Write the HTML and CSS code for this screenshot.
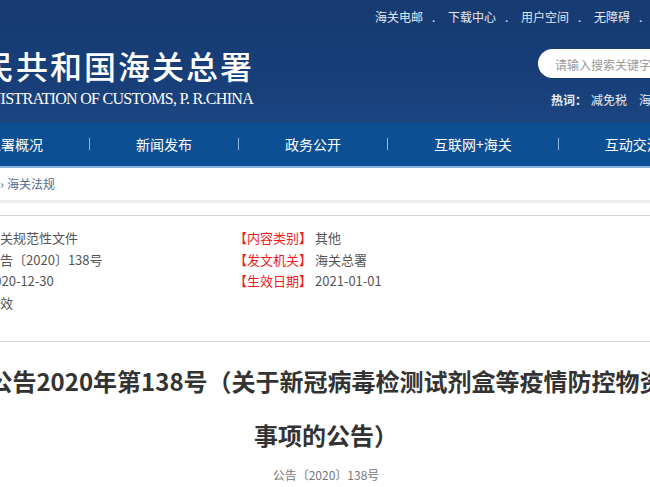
FILE: index.html
```html
<!DOCTYPE html>
<html lang="zh-CN">
<head>
  <meta charset="UTF-8" />
  <meta name="viewport" content="width=device-width, initial-scale=1.0" />
  <title>海关总署公告2020年第138号</title>
  <link rel="stylesheet" href="styles.css">
</head>
<body>
  <div class="page">
    <div class="header">
      <div class="logo">
        <div class="logo-cn">中华人民共和国海关总署</div>
        <div class="logo-en">GENERAL ADMINISTRATION OF CUSTOMS, P. R.CHINA</div>
      </div>
      <div class="header-right">
        <div class="toplinks">
          <a>海关电邮</a><span class="dot">.</span><a>下载中心</a><span class="dot">.</span><a>用户空间</a><span class="dot">.</span><a>无障碍</a><span class="dot">.</span><a>English</a>
        </div>
        <div class="search-area">
          <div class="search"><span class="placeholder">请输入搜索关键字</span></div>
          <div class="hot"><b>热词：</b><a>减免税</a><a>海关统计</a></div>
        </div>
      </div>
    </div>

    <div class="nav">
      <a>总署概况</a><span class="sep"></span>
      <a>新闻发布</a><span class="sep"></span>
      <a>政务公开</a><span class="sep"></span>
      <a>互联网+海关</a><span class="sep"></span>
      <a>互动交流</a><span class="sep"></span>
      <a>专题专栏</a>
    </div>

    <div class="crumb">
      <a>首页</a><span class="arrow">›</span><a>海关法规</a>
    </div>

    <div class="info">
      <div class="cell"><span class="label">【文件类型】</span>海关规范性文件</div>
      <div class="cell"><span class="label">【内容类别】</span>其他</div>
      <div class="cell"><span class="label">【文　　号】</span>公告〔2020〕138号</div>
      <div class="cell"><span class="label">【发文机关】</span>海关总署</div>
      <div class="cell"><span class="label">【发布日期】</span>2020-12-30</div>
      <div class="cell"><span class="label">【生效日期】</span>2021-01-01</div>
      <div class="cell"><span class="label">【效　　力】</span>有效</div>
      <div class="cell"></div>
    </div>

    <h1 class="title">海关总署公告2020年第138号（关于新冠病毒检测试剂盒等疫情防控物资出口有关事项的公告）</h1>
    <div class="docno">公告〔2020〕138号</div>
  </div>
</body>
</html>
```

FILE: styles.css
```css
* {
  box-sizing: border-box;
}
html, body {
  margin: 0;
}
body {
  overflow: hidden;
  font-family: "Noto Sans CJK SC", "Microsoft YaHei", sans-serif;
  background-color: #fff;
  color: #555;
}
a {
  color: inherit;
  text-decoration: none;
}
.page {
  width: 1000px;
  margin-left: -174px;
}

/* header */
.header {
  height: 123px;
  display: flex;
  background: linear-gradient(180deg, #163b72 0%, #183f79 70%, #1b4682 100%);
  color: #fff;
}
.logo {
  width: 427px;
  text-align: right;
  padding-top: 45px;
}
.logo-cn {
  font-size: 32px;
  line-height: 40px;
  font-weight: 500;
  letter-spacing: 2px;
  margin-right: -1px;
  white-space: nowrap;
}
.logo-en {
  font-family: "Liberation Serif", serif;
  font-size: 16px;
  line-height: 20px;
  letter-spacing: -0.7px;
  margin-top: 4px;
  white-space: nowrap;
}
.header-right {
  margin-left: 122px;
  padding-top: 9px;
}
.toplinks {
  font-size: 12px;
  line-height: 16px;
  color: #e3e9f2;
  white-space: nowrap;
}
.toplinks .dot {
  display: inline-block;
  width: 25px;
  padding-left: 9px;
}
.search-area {
  margin-left: 163px;
}
.search {
  margin-top: 24px;
  width: 260px;
  height: 29px;
  border-radius: 15px;
  background-color: #fff;
  padding-left: 17px;
  line-height: 29px;
}
.placeholder {
  font-size: 12px;
  color: #999;
}
.hot {
  margin-top: 14px;
  margin-left: 13px;
  font-size: 12px;
  line-height: 16px;
  color: #e8edf5;
  white-space: nowrap;
}
.hot b {
  font-weight: 700;
}
.hot a {
  margin-left: 4px;
  margin-right: 8px;
}

/* nav */
.nav {
  height: 45px;
  display: flex;
  align-items: center;
  padding-left: 115px;
  padding-bottom: 2px;
  background-color: #0c4f93;
  border-bottom: 2px solid #8cb2db;
  white-space: nowrap;
}
.nav a {
  padding: 0 46px;
  font-size: 14px;
  color: #fff;
}
.nav .sep {
  flex: none;
  width: 1px;
  height: 12px;
  background-color: #94b4da;
}

/* breadcrumb */
.crumb {
  padding: 8px 0 8px 147px;
  font-size: 12px;
  line-height: 16px;
  color: #4f6b8f;
  border-bottom: 3px solid #ececec;
}
.crumb .arrow {
  display: inline-block;
  width: 10px;
  text-align: center;
}

/* info box */
.info {
  margin-top: 12px;
  padding: 11px 0 28px 80px;
  border-top: 1px solid #d6d6d6;
  border-bottom: 1px solid #d6d6d6;
  display: grid;
  grid-template-columns: 328px 1fr;
  font-size: 13px;
  line-height: 21.5px;
  color: #555;
}
.cell {
  white-space: nowrap;
}
.label {
  color: #ee1c1c;
  margin-right: 3px;
}

/* article */
.title {
  margin: 12px 0 0;
  padding: 0 64px;
  font-size: 24px;
  line-height: 54px;
  font-weight: 700;
  color: #333;
  text-align: center;
}
.docno {
  margin-top: 5px;
  font-size: 12px;
  line-height: 16px;
  color: #777;
  text-align: center;
}
```
